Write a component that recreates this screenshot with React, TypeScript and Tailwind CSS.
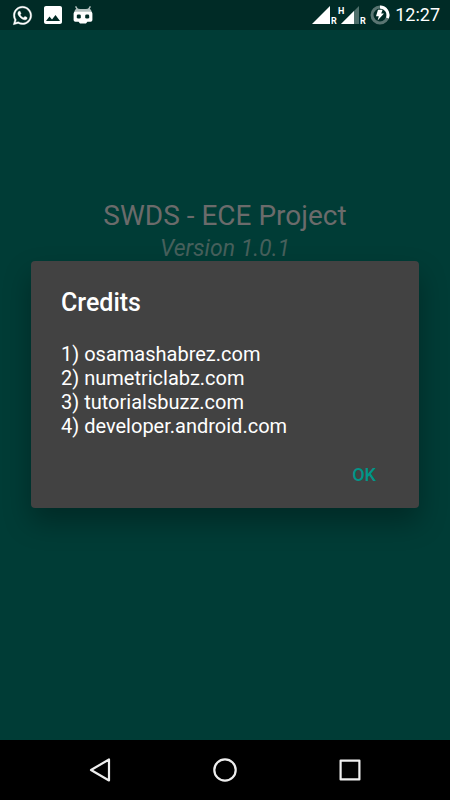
import type { ReactNode } from "react";
import { FaWhatsapp } from "react-icons/fa";
import { MdImage } from "react-icons/md";

const credits = [
  "osamashabrez.com",
  "numetriclabz.com",
  "tutorialsbuzz.com",
  "developer.android.com",
];

function RobotIcon() {
  return (
    <svg width="20" height="18" viewBox="0 0 20 18" aria-hidden="true">
      <path d="M2.6 0.4 L4.4 3.4 M17.4 0.4 L15.6 3.4" stroke="#b4c2c0" strokeWidth="1.4" />
      <path d="M1 7 Q1.6 3 4 2.4 Q10 3.8 16 2.4 Q18.4 3 19 7 Z" fill="#b4c2c0" />
      <path
        fill="#fff"
        d="M2.4 5.8 H17.6 Q19.4 5.8 19.4 7.6 V14 Q19.4 15.8 17.6 15.8 H14.4 L13 17.4 H7 L5.6 15.8 H2.4 Q0.6 15.8 0.6 14 V7.6 Q0.6 5.8 2.4 5.8 Z"
      />
      <rect x="3.8" y="8.4" width="4" height="4.2" rx="1.4" fill="#002b26" />
      <rect x="12.2" y="8.4" width="4" height="4.2" rx="1.4" fill="#002b26" />
    </svg>
  );
}

function SignalIcons() {
  return (
    <svg width="58" height="22" viewBox="0 0 58 22" aria-hidden="true">
      <path d="M0 20 L18 2 V20 Z" fill="#fff" />
      <path d="M29 20 L47 2 V20 Z" fill="#4f6f6b" />
      <path d="M29 20 L42 7 V20 Z" fill="#fff" />
      <g fill="#fff" fontFamily="Roboto, sans-serif" fontWeight="700" fontSize="9">
        <text x="19" y="20">R</text>
        <text x="26" y="10">H</text>
        <text x="48" y="20">R</text>
      </g>
    </svg>
  );
}

function BatteryIcon() {
  return (
    <svg width="20" height="20" viewBox="0 0 20 20" aria-hidden="true">
      <circle cx="10" cy="10" r="8" fill="none" stroke="#5a7572" strokeWidth="3" />
      <path d="M10 2 A8 8 0 0 1 17.4 13" fill="none" stroke="#fff" strokeWidth="3" />
      <path d="M8 4.8 H12.6 L11.2 8.4 H14 L7.6 15.4 L8.8 11.2 H6 Z" fill="#fff" />
    </svg>
  );
}

function StatusBar() {
  return (
    <header className="flex h-[30px] items-center justify-between bg-[#002b26] pl-3 pr-[10px] text-white">
      <div className="flex items-center gap-2">
        <FaWhatsapp size={21} stroke="#fff" strokeWidth={10} />
        <MdImage size={24} />
        <RobotIcon />
      </div>
      <div className="flex items-center">
        <SignalIcons />
        <BatteryIcon />
        <span className="pl-[5px] text-[18px] leading-6">12:27</span>
      </div>
    </header>
  );
}

function CreditsDialog() {
  return (
    <div
      role="dialog"
      aria-labelledby="credits-title"
      className="w-full rounded-sm bg-[#424242] shadow-[0_14px_28px_rgba(0,0,0,0.3)]"
    >
      <div className="px-[30px] pt-[26px] text-white">
        <h2 id="credits-title" className="text-[25px] font-medium leading-8">
          Credits
        </h2>
        <ol className="mt-[23px] text-[20px] leading-6">
          {credits.map((site, i) => (
            <li key={site}>
              {i + 1}) {site}
            </li>
          ))}
        </ol>
      </div>
      <div className="flex justify-end px-[31px] pb-3 pt-[14px]">
        <button className="h-11 px-3 text-[18px] font-medium text-[#009688]">OK</button>
      </div>
    </div>
  );
}

function NavButton({ label, children }: { label: string; children: ReactNode }) {
  return (
    <button aria-label={label} className="flex items-center justify-center">
      <svg
        width="26"
        height="26"
        viewBox="0 0 26 26"
        fill="none"
        stroke="#eee"
        strokeWidth="2.2"
        strokeLinejoin="round"
      >
        {children}
      </svg>
    </button>
  );
}

function NavBar() {
  return (
    <nav className="grid h-[60px] grid-cols-3 bg-black px-[37px]">
      <NavButton label="Back">
        <path d="M22 2.5 V23.5 L4 13 Z" />
      </NavButton>
      <NavButton label="Home">
        <circle cx="13" cy="13" r="10.7" />
      </NavButton>
      <NavButton label="Recent apps">
        <rect x="3.6" y="3.6" width="18.8" height="18.8" />
      </NavButton>
    </nav>
  );
}

export default function App() {
  return (
    <div className="flex min-h-screen flex-col bg-[#003c36] font-['Roboto',sans-serif]">
      <StatusBar />
      <main className="relative flex-1">
        <div className="pt-[168px] text-center">
          <h1 className="text-[28px] leading-9 text-[#6b6b6b]">SWDS - ECE Project</h1>
          <p className="text-[23px] italic leading-[30px] text-[#47605c]">Version 1.0.1</p>
        </div>
        <div className="absolute inset-0 flex items-center px-[31px] pb-px">
          <CreditsDialog />
        </div>
      </main>
      <NavBar />
    </div>
  );
}
